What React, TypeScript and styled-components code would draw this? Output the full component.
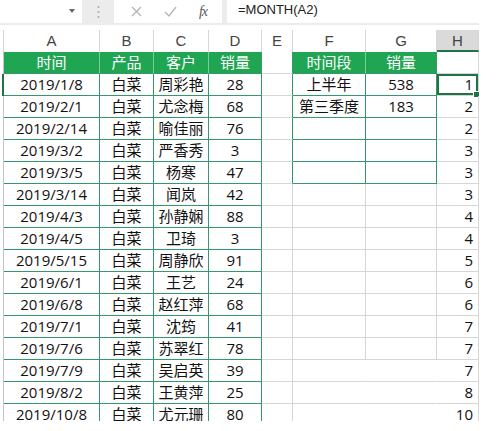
import React from "react";
import styled, { createGlobalStyle } from "styled-components";

const GREEN = "#20a553";
const GREEN_LINE = "#34996a";
const GRID = "#d6d6d6";
const SELECT = "#217346";
const COLS = "4px 96px 54px 55px 53px 31px 73px 71px 42px";

const GlobalStyle = createGlobalStyle`
  body {
    margin: 0;
    background: #fff;
    font-family: "Open Sans", "Noto Sans CJK SC", sans-serif;
  }
`;

const Frame = styled.div`
  width: 479px;
  height: 421px;
  overflow: hidden;
  background: #fff;
`;

const Toolbar = styled.div`
  height: 25px;
  display: flex;
  align-items: flex-start;
  background: #ececec;
`;

const NameBox = styled.div`
  position: relative;
  width: 82px;
  height: 23px;
  background: #fff;

  &::after {
    content: "";
    position: absolute;
    right: 7px;
    top: 9px;
    border-left: 3px solid transparent;
    border-right: 3px solid transparent;
    border-top: 4px solid #666;
  }
`;

const Grip = styled.div`
  width: 32px;
  height: 23px;
  display: flex;
  align-items: center;
  justify-content: center;
`;

const FxBox = styled.div`
  width: 108px;
  height: 23px;
  background: #fff;
  display: flex;
  align-items: center;
  justify-content: space-around;
  padding: 0 4px 0 6px;
  box-sizing: border-box;
`;

const FxLabel = styled.span`
  font-family: "Liberation Serif", serif;
  font-style: italic;
  font-size: 14px;
  color: #555;
  letter-spacing: -1px;
`;

const Formula = styled.div`
  flex: 1;
  margin-left: 5px;
  height: 23px;
  background: #fff;
  padding-left: 11px;
  font-family: "Liberation Sans", sans-serif;
  font-size: 13px;
  line-height: 20px;
  color: #222;
`;

const ColumnBar = styled.div`
  display: grid;
  grid-template-columns: ${COLS};
  padding-top: 5px;
  height: 27px;
  box-sizing: border-box;
`;

const ColumnLetter = styled.div<{ $selected?: boolean }>`
  height: 22px;
  box-sizing: border-box;
  border-right: 1px solid ${GRID};
  border-bottom: ${(p) => (p.$selected ? `2px solid ${SELECT}` : "none")};
  background: ${(p) => (p.$selected ? "#dadada" : "transparent")};
  text-align: center;
  font-family: "Liberation Sans", sans-serif;
  font-size: 15px;
  line-height: 22px;
  color: #444;
`;

const Sheet = styled.div`
  display: grid;
  grid-template-columns: ${COLS};
  grid-auto-rows: 22px;
  font-size: 15px;
  color: #111;
`;

const Gutter = styled.div<{ $active?: boolean }>`
  border-right: ${(p) => (p.$active ? `2px solid ${SELECT}` : "1px solid #c4c4c4")};
`;

const HeadCell = styled.div<{ $last?: boolean }>`
  background: ${GREEN};
  color: #fff;
  text-align: center;
  line-height: 21px;
  border-right: 1px solid ${(p) => (p.$last ? GREEN_LINE : "#7ccc9d")};
  border-bottom: 1px solid ${GREEN_LINE};
`;

const TableCell = styled.div`
  text-align: center;
  line-height: 21px;
  white-space: nowrap;
  border-right: 1px solid ${GREEN_LINE};
  border-bottom: 1px solid ${GREEN_LINE};
`;

const GridCell = styled.div<{ $edge?: string }>`
  border-right: 1px solid ${(p) => p.$edge ?? GRID};
  border-bottom: 1px solid ${GRID};
`;

const MonthCell = styled.div<{ $active?: boolean }>`
  position: relative;
  text-align: right;
  padding-right: 5px;
  line-height: 21px;
  border-right: 1px solid ${GRID};
  border-bottom: 1px solid ${GRID};
  box-shadow: ${(p) => (p.$active ? `inset 0 0 0 2px ${SELECT}` : "none")};

  &::after {
    content: "";
    display: ${(p) => (p.$active ? "block" : "none")};
    position: absolute;
    right: -2px;
    bottom: -3px;
    width: 5px;
    height: 5px;
    background: ${SELECT};
    border: 1px solid #fff;
  }
`;

const orders: [string, string, number][] = [
  ["2019/1/8", "周彩艳", 28],
  ["2019/2/1", "尤念梅", 68],
  ["2019/2/14", "喻佳丽", 76],
  ["2019/3/2", "严香秀", 3],
  ["2019/3/5", "杨寒", 47],
  ["2019/3/14", "闻岚", 42],
  ["2019/4/3", "孙静娴", 88],
  ["2019/4/5", "卫琦", 3],
  ["2019/5/15", "周静欣", 91],
  ["2019/6/1", "王艺", 24],
  ["2019/6/8", "赵红萍", 68],
  ["2019/7/1", "沈筠", 41],
  ["2019/7/6", "苏翠红", 78],
  ["2019/7/9", "吴启英", 39],
  ["2019/8/2", "王黄萍", 25],
  ["2019/10/8", "尤元珊", 80],
];

const months = [1, 2, 2, 3, 3, 3, 4, 4, 5, 6, 6, 7, 7, 7, 8, 10];

// 汇总表：上半年、第三季度，下面留三行空白
const periods: [string, string][] = [
  ["上半年", "538"],
  ["第三季度", "183"],
  ["", ""],
  ["", ""],
  ["", ""],
];

const letters = ["A", "B", "C", "D", "E", "F", "G", "H"];

const App = () => {
  return (
    <>
      <GlobalStyle />
      <Frame>
        <Toolbar>
          <NameBox />
          <Grip>
            <svg width="3" height="14" viewBox="0 0 3 14">
              <circle cx="1.5" cy="2" r="1" fill="#a8a8a8" />
              <circle cx="1.5" cy="7" r="1" fill="#a8a8a8" />
              <circle cx="1.5" cy="12" r="1" fill="#a8a8a8" />
            </svg>
          </Grip>
          <FxBox>
            <svg width="11" height="11" viewBox="0 0 11 11">
              <path d="M1 1L10 10M10 1L1 10" stroke="#b4b4b4" strokeWidth="1.3" />
            </svg>
            <svg width="13" height="11" viewBox="0 0 13 11">
              <path d="M1 6L5 10L12 1" stroke="#b4b4b4" strokeWidth="1.3" fill="none" />
            </svg>
            <FxLabel>fx</FxLabel>
          </FxBox>
          <Formula>=MONTH(A2)</Formula>
        </Toolbar>

        <ColumnBar>
          <ColumnLetter />
          {letters.map((l) => (
            <ColumnLetter key={l} $selected={l === "H"}>
              {l}
            </ColumnLetter>
          ))}
        </ColumnBar>

        <Sheet>
          <Gutter />
          <HeadCell>时间</HeadCell>
          <HeadCell>产品</HeadCell>
          <HeadCell>客户</HeadCell>
          <HeadCell $last>销量</HeadCell>
          <GridCell $edge={GREEN_LINE} />
          <HeadCell>时间段</HeadCell>
          <HeadCell $last>销量</HeadCell>
          <MonthCell />

          {orders.map(([date, customer, qty], i) => {
            const period = periods[i];
            const bare = i >= 13;
            return (
              <React.Fragment key={date}>
                <Gutter $active={i === 0} />
                <TableCell>{date}</TableCell>
                <TableCell>白菜</TableCell>
                <TableCell>{customer}</TableCell>
                <TableCell>{qty}</TableCell>
                <GridCell $edge={period ? GREEN_LINE : undefined} />
                {period ? (
                  <>
                    <TableCell>{period[0]}</TableCell>
                    <TableCell>{period[1]}</TableCell>
                  </>
                ) : (
                  <>
                    <GridCell $edge={bare ? "transparent" : undefined} />
                    <GridCell $edge={bare ? "transparent" : undefined} />
                  </>
                )}
                <MonthCell $active={i === 0}>{months[i]}</MonthCell>
              </React.Fragment>
            );
          })}
        </Sheet>
      </Frame>
    </>
  );
};

export default App;
